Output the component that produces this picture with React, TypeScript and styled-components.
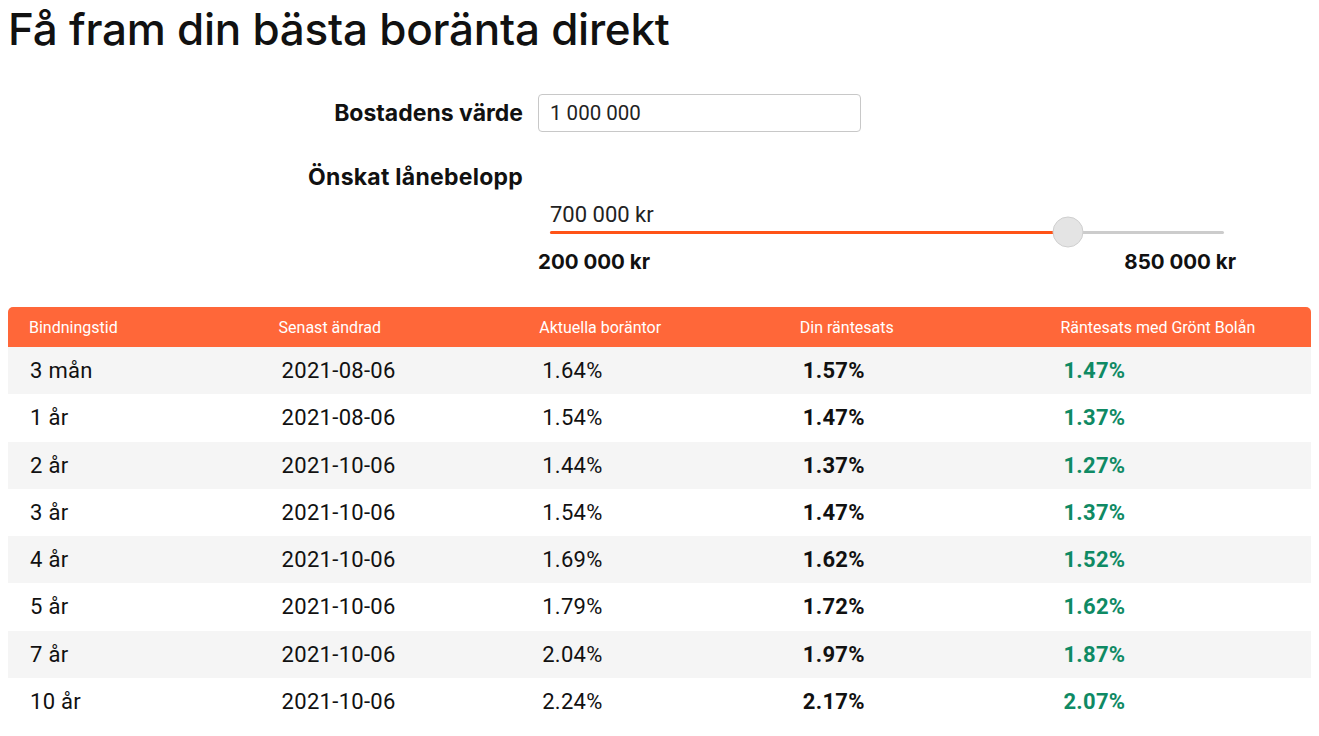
import React from "react";
import styled, { createGlobalStyle } from "styled-components";

const GlobalStyle = createGlobalStyle`
  html, body { margin: 0; padding: 0; background: #ffffff; }
  body { font-family: Roboto, "Liberation Sans", Arial, sans-serif; color: #111; }
  * { box-sizing: border-box; }
`;

const Page = styled.div`
  padding: 0 8px;
`;

const Title = styled.h1`
  margin: 1px 0 0;
  font-family: Inter, Roboto, sans-serif;
  font-weight: 500;
  font-size: 44px;
  line-height: 56px;
  letter-spacing: -0.25px;
  color: #111;
`;

const Form = styled.div`
  display: grid;
  grid-template-columns: 515px 698px;
  column-gap: 15px;
  align-items: center;
  margin-top: 37px;
`;

const Label = styled.label<{ $top?: number; $spacing?: number }>`
  justify-self: end;
  font-family: Inter, Roboto, sans-serif;
  font-weight: 700;
  font-size: 23px;
  letter-spacing: ${(p) => p.$spacing ?? 0}px;
  color: #111;
  margin-top: ${(p) => p.$top ?? 0}px;
`;

const TextInput = styled.input`
  width: 323px;
  height: 38px;
  border: 1px solid #c8c8c8;
  border-radius: 4px;
  padding: 0 11px;
  font-family: Roboto, sans-serif;
  font-size: 20.5px;
  color: #222;
  outline: none;
`;

const Empty = styled.div``;

const SliderBlock = styled.div`
  display: flex;
  flex-direction: column;
  margin-top: 12px;
`;

const SliderValue = styled.div`
  padding-left: 12px;
  font-family: Roboto, sans-serif;
  font-size: 22px;
  line-height: 24px;
  color: #222;
`;

const TrackWrap = styled.div`
  height: 10px;
  margin: 0 12px;
  display: flex;
  align-items: center;
`;

const Track = styled.div`
  position: relative;
  width: 100%;
  height: 3px;
  background: #cccccc;
  border-radius: 2px;
`;

const Fill = styled.div`
  height: 100%;
  background: #ff5317;
  border-radius: 2px 0 0 2px;
`;

const Thumb = styled.div`
  position: absolute;
  top: 50%;
  width: 31px;
  height: 31px;
  border-radius: 50%;
  background: #e4e4e4;
  border: 1px solid #cfcfcf;
  transform: translate(-50%, -50%);
`;

const Bounds = styled.div`
  display: flex;
  justify-content: space-between;
  font-family: Inter, Roboto, sans-serif;
  font-weight: 700;
  font-size: 20.5px;
  letter-spacing: 0;
  line-height: 24px;
  margin-top: 13px;
  color: #111;
`;

const Table = styled.table`
  width: 100%;
  margin-top: 33px;
  border-collapse: collapse;
  table-layout: fixed;
`;

const Th = styled.th<{ $first?: boolean }>`
  height: 40px;
  padding: 0 0 0 ${(p) => (p.$first ? 21 : 10)}px;
  background: #ff6739;
  color: #ffffff;
  text-align: left;
  font-family: Roboto, sans-serif;
  font-weight: 400;
  font-size: 16px;
  &:first-child { border-top-left-radius: 5px; }
  &:last-child { border-top-right-radius: 5px; }
`;

const Tr = styled.tr<{ $shade: boolean }>`
  background: ${(p) => (p.$shade ? "#f5f5f5" : "#ffffff")};
`;

const Td = styled.td<{ $first?: boolean; $kind?: "bold" | "green" }>`
  height: 47.25px;
  padding: 0 0 0 ${(p) => (p.$first ? 22 : 13)}px;
  font-family: Roboto, sans-serif;
  font-size: 22px;
  letter-spacing: 0.3px;
  font-weight: ${(p) => (p.$kind ? 700 : 400)};
  color: ${(p) => (p.$kind === "green" ? "#0f8a64" : "#111")};
`;

const rows = [
  ["3 mån", "2021-08-06", "1.64%", "1.57%", "1.47%"],
  ["1 år", "2021-08-06", "1.54%", "1.47%", "1.37%"],
  ["2 år", "2021-10-06", "1.44%", "1.37%", "1.27%"],
  ["3 år", "2021-10-06", "1.54%", "1.47%", "1.37%"],
  ["4 år", "2021-10-06", "1.69%", "1.62%", "1.52%"],
  ["5 år", "2021-10-06", "1.79%", "1.72%", "1.62%"],
  ["7 år", "2021-10-06", "2.04%", "1.97%", "1.87%"],
  ["10 år", "2021-10-06", "2.24%", "2.17%", "2.07%"],
];

const headers = [
  "Bindningstid",
  "Senast ändrad",
  "Aktuella boräntor",
  "Din räntesats",
  "Räntesats med Grönt Bolån",
];

export default function App() {
  const min = 200000;
  const max = 850000;
  const value = 700000;
  const pct = ((value - min) / (max - min)) * 100;
  return (
    <Page>
      <GlobalStyle />
      <Title>Få fram din bästa boränta direkt</Title>
      <Form>
        <Label>Bostadens värde</Label>
        <TextInput defaultValue="1 000 000" />
        <Label $top={31} $spacing={0.25}>
          Önskat lånebelopp
        </Label>
        <Empty />
        <Empty />
        <SliderBlock>
          <SliderValue>700 000 kr</SliderValue>
          <TrackWrap>
            <Track>
              <Fill style={{ width: `${pct}%` }} />
              <Thumb style={{ left: `${pct}%` }} />
            </Track>
          </TrackWrap>
          <Bounds>
            <span>200 000 kr</span>
            <span>850 000 kr</span>
          </Bounds>
        </SliderBlock>
      </Form>
      <Table>
        <thead>
          <tr>
            {headers.map((h, i) => (
              <Th key={h} $first={i === 0}>
                {h}
              </Th>
            ))}
          </tr>
        </thead>
        <tbody>
          {rows.map((r, ri) => (
            <Tr key={r[0]} $shade={ri % 2 === 0}>
              {r.map((c, ci) => (
                <Td
                  key={ci}
                  $first={ci === 0}
                  $kind={ci === 3 ? "bold" : ci === 4 ? "green" : undefined}
                >
                  {c}
                </Td>
              ))}
            </Tr>
          ))}
        </tbody>
      </Table>
    </Page>
  );
}
